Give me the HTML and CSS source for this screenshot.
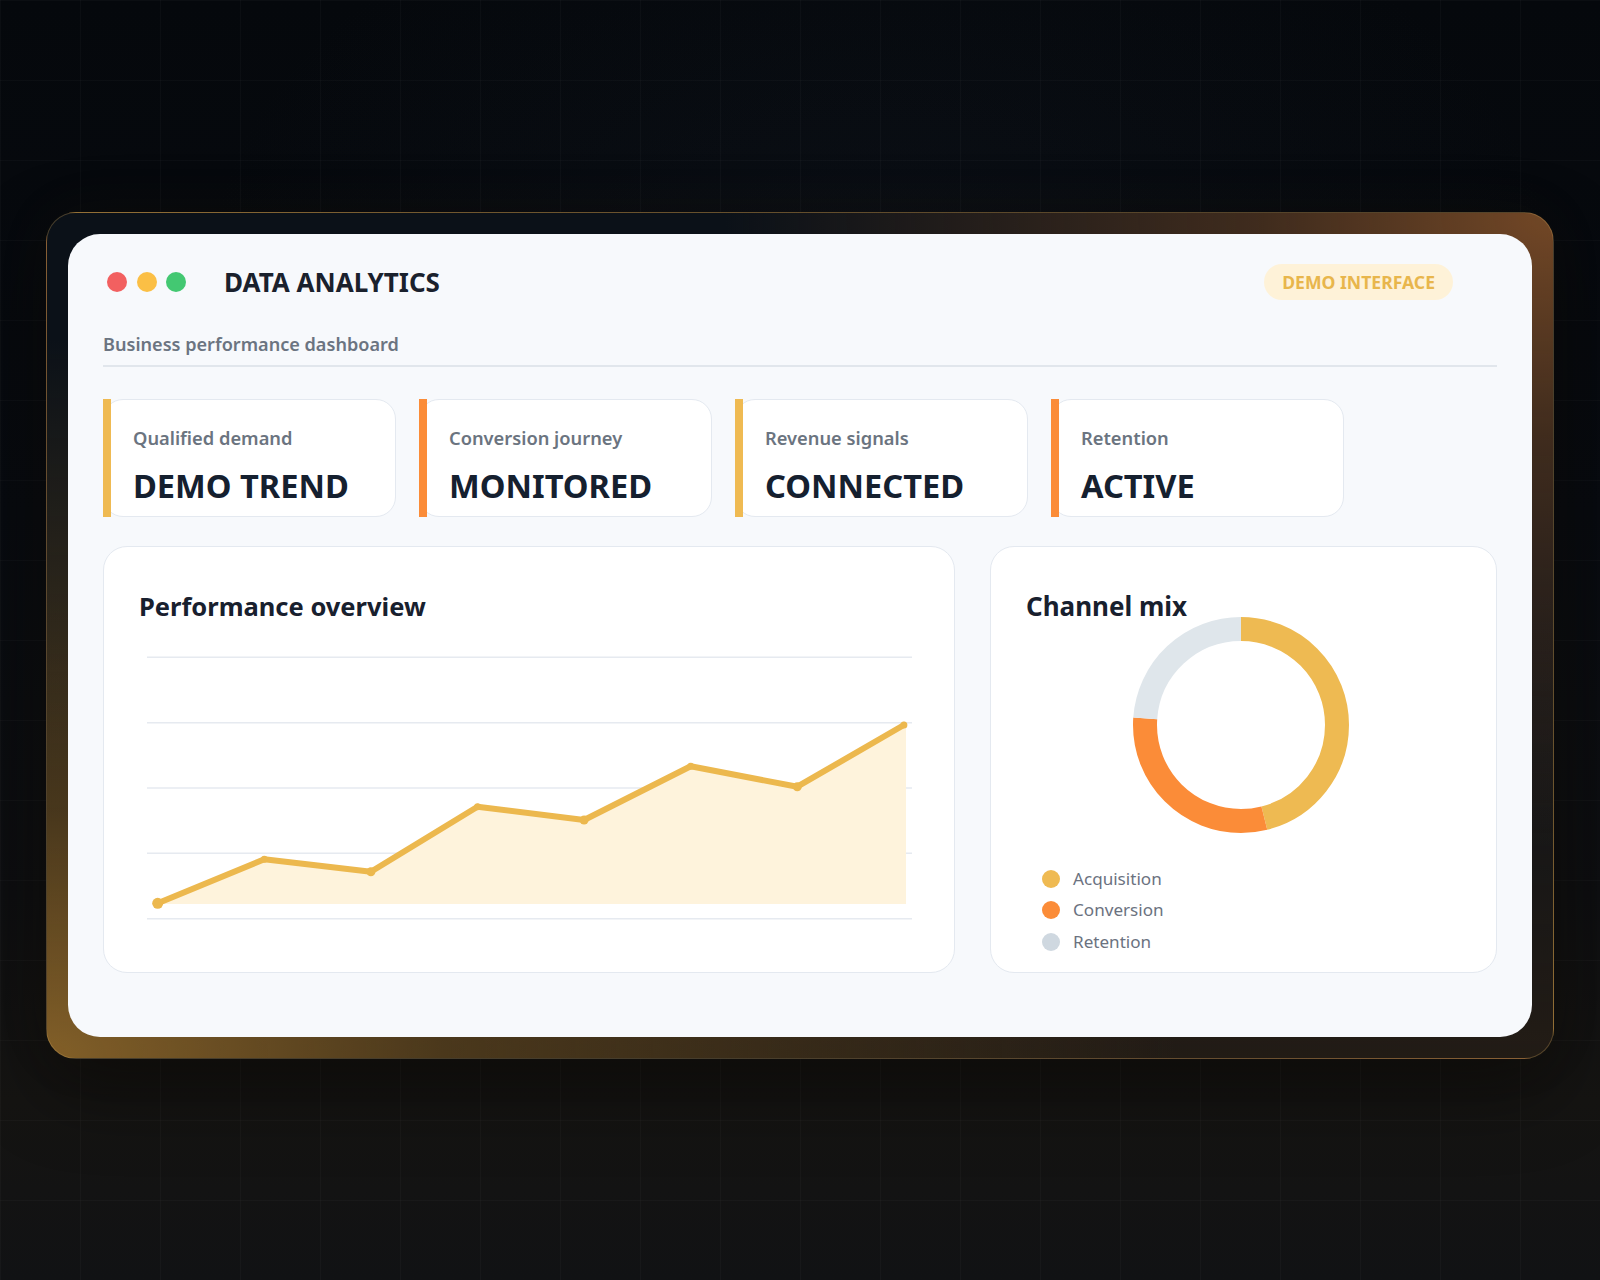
FILE: index.html
```html
<!DOCTYPE html>
<html lang="en">
<head>
<meta charset="utf-8">
<title>Data Analytics</title>
<link rel="stylesheet" href="styles.css">
</head>
<body>
<div class="stage">
  <div class="frame">
    <div class="window">
      <header class="topbar">
        <div class="dots">
          <span class="dot dot-red"></span>
          <span class="dot dot-yellow"></span>
          <span class="dot dot-green"></span>
        </div>
        <h1 class="title">DATA ANALYTICS</h1>
        <span class="badge">DEMO INTERFACE</span>
      </header>
      <p class="subtitle">Business performance dashboard</p>

      <section class="kpis">
        <div class="kpi kpi-gold">
          <div class="kpi-label">Qualified demand</div>
          <div class="kpi-value">DEMO TREND</div>
        </div>
        <div class="kpi kpi-orange">
          <div class="kpi-label">Conversion journey</div>
          <div class="kpi-value">MONITORED</div>
        </div>
        <div class="kpi kpi-gold">
          <div class="kpi-label">Revenue signals</div>
          <div class="kpi-value">CONNECTED</div>
        </div>
        <div class="kpi kpi-orange">
          <div class="kpi-label">Retention</div>
          <div class="kpi-value">ACTIVE</div>
        </div>
      </section>

      <section class="charts">
        <div class="panel panel-perf">
          <h2 class="panel-title">Performance overview</h2>
          <svg class="line-chart" width="780" height="290" viewBox="0 0 780 290">
            <g class="grid">
              <line x1="8" y1="17.3" x2="773" y2="17.3"/>
              <line x1="8" y1="82.7" x2="773" y2="82.7"/>
              <line x1="8" y1="148" x2="773" y2="148"/>
              <line x1="8" y1="213.3" x2="773" y2="213.3"/>
              <line x1="8" y1="278.7" x2="773" y2="278.7"/>
            </g>
            <polygon class="area" points="18.7,263.3 125.3,219.3 231.9,231.7 338.5,166.7 445.1,180 551.7,126.3 658.3,146.7 764.9,85 767,85 767,264 18.7,264"/>
            <polyline class="trend" points="18.7,263.3 125.3,219.3 231.9,231.7 338.5,166.7 445.1,180 551.7,126.3 658.3,146.7 764.9,85"/>
            <g class="marks">
              <circle cx="18.7" cy="263.3" r="5.5"/>
              <circle cx="125.3" cy="219.3" r="3.5"/>
              <circle cx="231.9" cy="231.7" r="4.5"/>
              <circle cx="338.5" cy="166.7" r="3.5"/>
              <circle cx="445.1" cy="180" r="4.5"/>
              <circle cx="551.7" cy="126.3" r="3.5"/>
              <circle cx="658.3" cy="146.7" r="4.5"/>
              <circle cx="764.9" cy="85" r="3.5"/>
            </g>
          </svg>
        </div>

        <div class="panel panel-mix">
          <h2 class="panel-title">Channel mix</h2>
          <div class="donut">
            <svg width="220" height="220" viewBox="0 0 220 220">
              <g transform="rotate(-90 110 110)">
                <circle class="seg seg-acq" cx="110" cy="110" r="96" stroke-dasharray="277.47 603.19" stroke-dashoffset="0"/>
                <circle class="seg seg-conv" cx="110" cy="110" r="96" stroke-dasharray="180.96 603.19" stroke-dashoffset="-277.47"/>
                <circle class="seg seg-ret" cx="110" cy="110" r="96" stroke-dasharray="144.76 603.19" stroke-dashoffset="-458.43"/>
              </g>
            </svg>
          </div>
          <ul class="legend">
            <li class="legend-item"><span class="swatch swatch-acq"></span>Acquisition</li>
            <li class="legend-item"><span class="swatch swatch-conv"></span>Conversion</li>
            <li class="legend-item"><span class="swatch swatch-ret"></span>Retention</li>
          </ul>
        </div>
      </section>
    </div>
  </div>
</div>
</body>
</html>
```

FILE: styles.css
```css
html, body {
  margin: 0;
  padding: 0;
  height: 100%;
}

body {
  min-height: 1280px;
  font-family: "Noto Sans", "Open Sans", "DejaVu Sans", sans-serif;
  background-color: #07090d;
  background-image:
    linear-gradient(rgba(255, 255, 255, 0.022) 1px, transparent 1px),
    linear-gradient(90deg, rgba(255, 255, 255, 0.022) 1px, transparent 1px),
    radial-gradient(ellipse 60% 45% at 55% 20%, rgba(30, 40, 55, 0.18), transparent 70%),
    linear-gradient(180deg, #05080c 0%, #080b10 40%, #0e0f11 70%, #151412 86%, #111214 100%);
  background-size: 80px 80px, 80px 80px, 100% 100%, 100% 100%;
}

.stage {
  display: flex;
  justify-content: center;
  padding-top: 212px;
}

.frame {
  padding: 21px;
  border: 1px solid rgba(196, 156, 86, 0.32);
  border-radius: 30px;
  background-color: #0b1118;
  background-image:
    radial-gradient(ellipse 55% 75% at 100% 0%, rgba(116, 72, 38, 0.98) 0%, rgba(92, 58, 32, 0.65) 35%, rgba(60, 40, 24, 0) 100%),
    radial-gradient(ellipse 75% 85% at 0% 100%, rgba(130, 95, 40, 1) 0%, rgba(92, 68, 30, 0.7) 35%, rgba(60, 44, 22, 0) 100%),
    linear-gradient(180deg, rgba(0, 0, 0, 0) 45%, rgba(44, 32, 20, 0.7) 100%);
  box-shadow: 0 30px 80px rgba(0, 0, 0, 0.45), 0 0 60px rgba(150, 100, 40, 0.06);
}

.window {
  width: 1464px;
  height: 803px;
  box-sizing: border-box;
  padding: 30px 35px 0 35px;
  background: #f7f9fc;
  border-radius: 32px;
}

/* Header */
.topbar {
  display: flex;
  align-items: center;
  height: 36px;
  padding-left: 4px;
}

.dots {
  display: flex;
  gap: 9.5px;
}

.dot {
  width: 20px;
  height: 20px;
  border-radius: 50%;
}

.dot-red { background: #f26060; }
.dot-yellow { background: #fbbf45; }
.dot-green { background: #43c872; }

.title {
  margin: 0 0 0 38px;
  font-size: 26px;
  line-height: 36px;
  font-weight: 700;
  color: #1a212d;
}

.badge {
  margin-left: auto;
  margin-right: 44px;
  height: 36px;
  padding: 0 18px;
  border-radius: 18px;
  background: #fef2d8;
  color: #e8b64c;
  font-size: 17.6px;
  font-weight: 700;
  line-height: 36px;
}

.subtitle {
  margin: 31.5px 0 0 0;
  padding-bottom: 9px;
  border-bottom: 2px solid #e1e6ec;
  font-size: 18.1px;
  line-height: 24px;
  font-weight: 600;
  color: #6b7481;
}

/* KPI cards */
.kpis {
  margin-top: 32px;
  display: grid;
  grid-template-columns: repeat(4, 293px);
  gap: 23px;
}

.kpi {
  position: relative;
  height: 118px;
  box-sizing: border-box;
  padding: 26px 20px 0 29px;
  background: #ffffff;
  border: 1px solid #e4e9f0;
  border-radius: 20px;
}

.kpi::before {
  content: "";
  position: absolute;
  left: -1px;
  top: -1px;
  bottom: -1px;
  width: 8px;
}

.kpi-gold::before { background: #efba52; }
.kpi-orange::before { background: #fb8c38; }

.kpi-label {
  font-size: 18.3px;
  line-height: 24px;
  font-weight: 600;
  color: #6b7480;
}

.kpi-value {
  margin-top: 15px;
  font-size: 32.6px;
  line-height: 42px;
  font-weight: 700;
  color: #15202f;
}

/* Charts */
.charts {
  margin-top: 29.5px;
  display: grid;
  grid-template-columns: 852px 1fr;
  grid-template-rows: 427px;
  gap: 35px;
}

.panel {
  box-sizing: border-box;
  padding: 43px 35px 0 35px;
  background: #ffffff;
  border: 1px solid #e4e9f0;
  border-radius: 24px;
}

.panel-title {
  margin: 0;
  font-size: 26px;
  line-height: 32px;
  font-weight: 700;
  color: #18202e;
}

.panel-perf .panel-title {
  font-size: 25.5px;
}

.line-chart {
  display: block;
  margin-top: 18px;
}

.grid line {
  stroke: #e6eaf0;
  stroke-width: 1.6;
}

.area {
  fill: #fef3dc;
}

.trend {
  fill: none;
  stroke: #ecb84e;
  stroke-width: 6;
  stroke-linejoin: round;
  stroke-linecap: round;
}

.marks circle {
  fill: #ecb84e;
}

.donut {
  display: flex;
  justify-content: center;
  margin-top: -6.7px;
  padding-right: 6px;
}

.donut svg {
  display: block;
}

.seg {
  fill: none;
  stroke-width: 24;
}

.seg-acq { stroke: #eeba52; }
.seg-conv { stroke: #fb8c38; }
.seg-ret { stroke: #dfe6eb; }

.legend {
  list-style: none;
  margin: 31.3px 0 0 0;
  padding: 0 0 0 16px;
  display: flex;
  flex-direction: column;
  gap: 7.6px;
}

.legend-item {
  display: flex;
  align-items: center;
  gap: 13px;
  height: 24px;
  font-size: 17.1px;
  line-height: 24px;
  color: #6b7280;
}

.swatch {
  width: 18px;
  height: 18px;
  border-radius: 50%;
  flex: none;
}

.swatch-acq { background: #efba52; }
.swatch-conv { background: #fb8c38; }
.swatch-ret { background: #cfd8e0; }
```
